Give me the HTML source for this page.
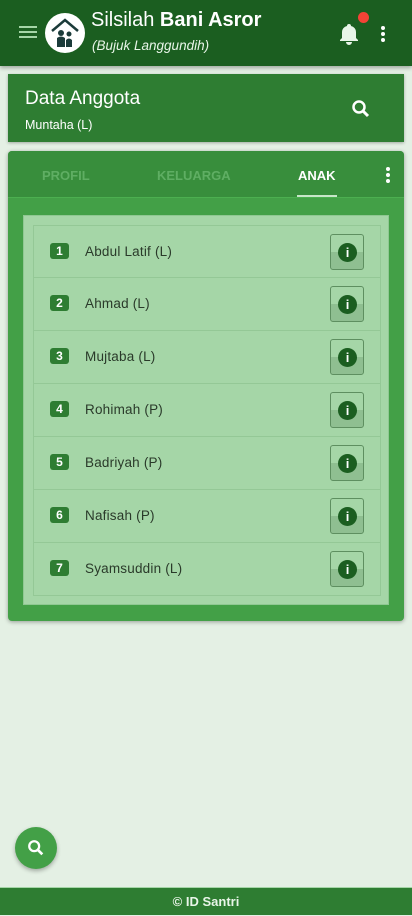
<!DOCTYPE html><html><head><style>
*{box-sizing:border-box;margin:0;padding:0}
body{width:412px;height:915px;background:#e4f0e4;font-family:"Liberation Sans",sans-serif;position:relative;overflow:hidden}
.hdr{position:absolute;left:0;top:0;width:412px;height:66px;background:#1b5e20;box-shadow:0 2px 4px rgba(0,0,0,.3)}
.abs{position:absolute}
.card{position:absolute;left:8px;top:74px;width:396px;height:68px;background:#2e7d32;box-shadow:0 1px 3px rgba(0,0,0,.3)}
.tabs{position:absolute;left:8px;top:151px;width:396px;height:470px;background:#43a047;border-radius:4px;box-shadow:0 1px 4px rgba(0,0,0,.35);overflow:hidden}
.tb{position:absolute;left:0;top:0;width:396px;height:47px;background:#388e3c;border-bottom:1px solid #4caf50}
.tab{position:absolute;top:17px;font-size:13px;font-weight:bold;color:#5fae63}
.panel{position:absolute;left:15px;top:64px;width:366px;height:390px;background:#a5d6a7;border:1px solid #8fc892}
.row{position:absolute;left:9px;width:348px;height:53px;border:1px solid #94c896;border-top:none}
.bd{position:absolute;left:16px;top:17px;width:19px;height:16px;background:#2e7d32;border-radius:3px;color:#fff;font-size:12px;font-weight:bold;text-align:center;line-height:16px}
.nm{position:absolute;left:51px;top:18px;font-size:13.5px;color:#2a3a2a;letter-spacing:.2px}
.ib{position:absolute;left:296px;top:8px;width:34px;height:36px;border:1px solid #5e8f60;border-radius:3px;background:linear-gradient(#a5d6a7 50%,#8fbf91 50%)}
.ib div{position:absolute;left:7px;top:8px;width:19px;height:19px;border-radius:50%;background:#1b5e20;color:#fff;font-weight:bold;font-size:13px;text-align:center;line-height:19px}
</style></head><body>
<div class="hdr">
<div class="abs" style="left:19px;top:26px;width:18px;height:2px;background:#a5d6a7;box-shadow:0 5px 0 #a5d6a7,0 10px 0 #a5d6a7"></div>
<div class="abs" style="left:45px;top:13px;width:40px;height:40px;border-radius:50%;background:#fff">
<svg width="40" height="40" viewBox="0 0 40 40"><path d="M7 18 L20 7 L33 18" stroke="#1b3b3a" stroke-width="2.5" fill="none"/><circle cx="16" cy="20" r="3" fill="#1b3b3a"/><circle cx="24" cy="21" r="2.5" fill="#1b3b3a"/><path d="M12 34 V25 Q16 22 20 25 V34Z M21 34 V27 Q24 24 27 27 V34Z" fill="#1b3b3a"/></svg></div>
<div class="abs" style="left:91px;top:9px;font-size:20px;color:#fff">Silsilah <b>Bani Asror</b></div>
<div class="abs" style="left:92px;top:38px;font-size:13.5px;font-style:italic;color:#e8f5e8">(Bujuk Langgundih)</div>
<svg class="abs" style="left:339px;top:23px" width="20" height="22" viewBox="0 0 20 22"><path d="M10 1a2 2 0 0 1 2 2 6 6 0 0 1 5 6v6l2 2v1H1v-1l2-2V9a6 6 0 0 1 5-6 2 2 0 0 1 2-2zM7 19h6a3 3 0 0 1-6 0z" fill="#e8f5e8"/></svg>
<div class="abs" style="left:358px;top:12px;width:11px;height:11px;border-radius:50%;background:#f44336"></div>
<div class="abs" style="left:381px;top:26px;width:4px;height:4px;border-radius:50%;background:#fff;box-shadow:0 6px 0 #fff,0 12px 0 #fff"></div>
</div>
<div class="card">
<div class="abs" style="left:17px;top:14px;font-size:19px;color:#fff">Data Anggota</div>
<div class="abs" style="left:17px;top:44px;font-size:12.5px;color:#fff">Muntaha (L)</div>
<svg class="abs" style="left:343px;top:25px" width="20" height="20" viewBox="0 0 20 20"><circle cx="8" cy="8" r="5.5" stroke="#fff" stroke-width="2.5" fill="none"/><path d="M12 12l5 5" stroke="#fff" stroke-width="3"/></svg>
</div>
<div class="tabs">
<div class="tb">
<div class="tab" style="left:34px">PROFIL</div>
<div class="tab" style="left:149px">KELUARGA</div>
<div class="tab" style="left:290px;color:#fff">ANAK</div>
<div class="abs" style="left:289px;top:44px;width:40px;height:2px;background:#c8e6c9"></div>
<div class="abs" style="left:378px;top:16px;width:4px;height:4px;border-radius:50%;background:#fff;box-shadow:0 6px 0 #fff,0 12px 0 #fff"></div>
</div>
<div class="panel">
<div class="row" style="top:9px;border-top:1px solid #94c896"><div class="bd">1</div><div class="nm">Abdul Latif (L)</div><div class="ib"><div>i</div></div></div>
<div class="row" style="top:62px"><div class="bd">2</div><div class="nm">Ahmad (L)</div><div class="ib"><div>i</div></div></div>
<div class="row" style="top:115px"><div class="bd">3</div><div class="nm">Mujtaba (L)</div><div class="ib"><div>i</div></div></div>
<div class="row" style="top:168px"><div class="bd">4</div><div class="nm">Rohimah (P)</div><div class="ib"><div>i</div></div></div>
<div class="row" style="top:221px"><div class="bd">5</div><div class="nm">Badriyah (P)</div><div class="ib"><div>i</div></div></div>
<div class="row" style="top:274px"><div class="bd">6</div><div class="nm">Nafisah (P)</div><div class="ib"><div>i</div></div></div>
<div class="row" style="top:327px"><div class="bd">7</div><div class="nm">Syamsuddin (L)</div><div class="ib"><div>i</div></div></div>
</div></div>
<div class="abs" style="left:15px;top:827px;width:42px;height:42px;border-radius:50%;background:#43a047;box-shadow:0 2px 4px rgba(0,0,0,.3)">
<svg class="abs" style="left:12px;top:12px" width="18" height="18" viewBox="0 0 20 20"><circle cx="8" cy="8" r="5.5" stroke="#fff" stroke-width="2.5" fill="none"/><path d="M12 12l5 5" stroke="#fff" stroke-width="3"/></svg></div>
<div class="abs" style="left:0;top:887px;width:412px;height:28px;background:#2e7d32;border-top:1px solid #a5d6a7;color:#e8f5e8;font-size:13px;font-weight:bold;text-align:center;line-height:28px">© ID Santri</div>
</body></html>
